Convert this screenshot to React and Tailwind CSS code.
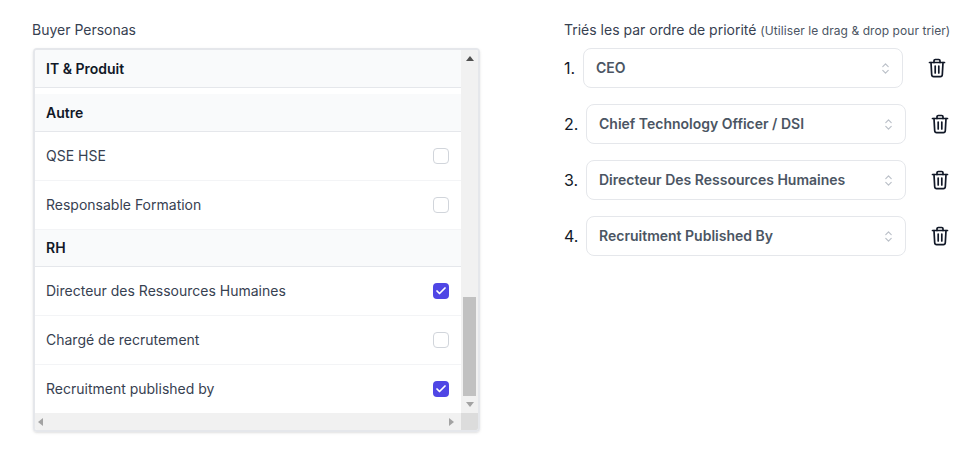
import { Check } from 'lucide-react';

const personaRows = [
  { type: 'group', label: 'IT & Produit', className: 'h-[38px]' },
  { type: 'gap' },
  { type: 'group', label: 'Autre', className: 'h-[38px]' },
  { type: 'item', label: 'QSE HSE' },
  { type: 'item', label: 'Responsable Formation' },
  { type: 'group', label: 'RH', className: 'h-[37px]' },
  { type: 'item', label: 'Directeur des Ressources Humaines', checked: true },
  { type: 'item', label: 'Chargé de recrutement' },
  { type: 'item', label: 'Recruitment published by', checked: true, last: true },
];

const priorities = [
  { label: 'CEO', offset: '' },
  { label: 'Chief Technology Officer / DSI', offset: 'ml-[3px]' },
  { label: 'Directeur Des Ressources Humaines', offset: 'ml-[3px]' },
  { label: 'Recruitment Published By', offset: 'ml-[3px]' },
];

const Arrow = ({ dir, className }) => {
  const points = {
    up: '0,6 4,1 8,6',
    down: '0,1 8,1 4,6',
    left: '6,0 6,8 1,4',
    right: '1,0 1,8 6,4',
  };
  return (
    <svg width="8" height="8" viewBox="0 0 8 8" className={`shrink-0 ${className}`}>
      <polygon points={points[dir]} fill="currentColor" />
    </svg>
  );
};

const SortIcon = () => (
  <svg width="7" height="11" viewBox="0 0 7 11" fill="none" stroke="#bcc1c9" strokeWidth="1.2" strokeLinecap="round" strokeLinejoin="round">
    <path d="M0.8 3.6 L3.5 0.8 L6.2 3.6" />
    <path d="M0.8 7.4 L3.5 10.2 L6.2 7.4" />
  </svg>
);

const TrashIcon = () => (
  <svg width="18" height="20" viewBox="0 0 18 20" fill="none" stroke="#111827" strokeWidth="1.7" strokeLinecap="round" strokeLinejoin="round" className="ml-[25px] shrink-0">
    <path d="M1.5 4.5 H16.5" />
    <path d="M6 4.5 V2.8 C6 2 6.6 1.5 7.3 1.5 H10.7 C11.4 1.5 12 2 12 2.8 V4.5" />
    <path d="M3 4.5 L3.7 16.8 C3.8 18 4.6 18.7 5.6 18.7 H12.4 C13.4 18.7 14.2 18 14.3 16.8 L15 4.5" />
    <path d="M7.2 8 V15" />
    <path d="M10.8 8 V15" />
  </svg>
);

const PersonaRow = ({ row }) => {
  if (row.type === 'gap') return <div className="h-[6px] shrink-0 bg-white" />;
  if (row.type === 'group') {
    return (
      <div className={`${row.className} shrink-0 flex items-center pl-[11px] pr-3 bg-[#f9fafb] border-b border-[#e5e7eb] text-sm font-semibold text-[#111827]`}>
        {row.label}
      </div>
    );
  }
  return (
    <div className={`shrink-0 flex items-center justify-between pl-[11px] pr-3 text-sm text-[#374151] ${row.last ? 'h-[48px]' : 'h-[49px] border-b border-[#f3f4f6]'}`}>
      <span>{row.label}</span>
      {row.checked ? (
        <span className="w-4 h-4 rounded bg-[#4f46e5] flex items-center justify-center">
          <Check size={12} strokeWidth={3.5} className="text-white" />
        </span>
      ) : (
        <span className="w-4 h-4 rounded border border-[#d1d5db] bg-white" />
      )}
    </div>
  );
};

export default function App() {
  return (
    <div className="w-[977px] h-[456px] bg-white flex font-['Inter',sans-serif] overflow-hidden">
      {/* Buyer personas */}
      <div className="w-[564px] pl-8 pt-[21px] shrink-0">
        <div className="text-sm leading-[18px] text-[#374151]">Buyer Personas</div>
        <div className="mt-[9px] ml-px w-[447px] h-[384px] rounded border-2 border-[#e5e7eb] flex flex-col shadow-sm overflow-hidden">
          <div className="flex flex-1 min-h-0">
            <div className="flex-1 min-w-0 flex flex-col overflow-hidden">
              {personaRows.map((row, idx) => <PersonaRow key={idx} row={row} />)}
            </div>
            <div className="w-[17px] bg-[#f1f1f1] flex flex-col items-center">
              <Arrow dir="up" className="text-[#505050] mt-[5px]" />
              <div className="mt-auto w-[13px] h-[99px] bg-[#c1c1c1]" />
              <Arrow dir="down" className="text-[#a3a3a3] mt-[5px] mb-[4px]" />
            </div>
          </div>
          <div className="h-[17px] bg-[#f1f1f1] flex items-center shrink-0">
            <Arrow dir="left" className="text-[#a3a3a3] ml-[2px]" />
            <Arrow dir="right" className="text-[#a3a3a3] ml-auto mr-[5px]" />
            <div className="w-[17px] h-full bg-[#dcdcdc]" />
          </div>
        </div>
      </div>

      {/* Priority list */}
      <div className="pt-[21px]">
        <div className="text-sm leading-[18px] text-[#374151] whitespace-nowrap">
          Triés les par ordre de priorité <span className="text-xs tracking-[0.07px] text-[#4b5563]">(Utiliser le drag &amp; drop pour trier)</span>
        </div>
        <div className="mt-[9px] flex flex-col gap-4">
          {priorities.map((item, idx) => (
            <div key={item.label} className="flex items-center">
              <span className="w-[19px] text-base text-[#111827]">{idx + 1}.</span>
              <div className={`${item.offset} w-[320px] h-10 rounded-lg border border-[#e5e7eb] bg-white flex items-center justify-between pl-3 pr-[13px] text-sm font-semibold text-[#4b5563]`}>
                <span>{item.label}</span>
                <SortIcon />
              </div>
              <TrashIcon />
            </div>
          ))}
        </div>
      </div>
    </div>
  );
}
